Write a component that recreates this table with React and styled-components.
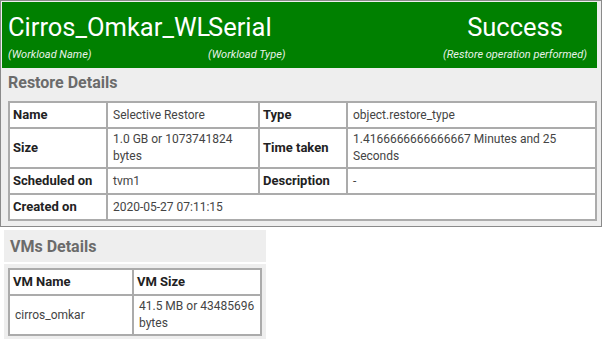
import React from 'react';
import styled, { createGlobalStyle } from 'styled-components';

const GlobalStyle = createGlobalStyle`
  body {
    margin: 0;
    background: #fff;
    font-family: Roboto, "Liberation Sans", sans-serif;
  }
`;

const restoreRows = [
  ['Name', 'Selective Restore', 'Type', 'object.restore_type'],
  ['Size', '1.0 GB or 1073741824 bytes', 'Time taken', '1.4166666666666667 Minutes and 25 Seconds'],
  ['Scheduled on', 'tvm1', 'Description', '-'],
];

export default function App() {
  return (
    <Page>
      <GlobalStyle />
      <Report>
        <Banner>
          <BannerCol>
            <BigText>Cirros_Omkar_WL</BigText>
            <Caption>(Workload Name)</Caption>
          </BannerCol>
          <BannerCol>
            <BigText>Serial</BigText>
            <Caption>(Workload Type)</Caption>
          </BannerCol>
          <BannerCol center>
            <BigText>Success</BigText>
            <Caption>(Restore operation performed)</Caption>
          </BannerCol>
        </Banner>
        <SectionTitle>Restore Details</SectionTitle>
        <TableWrap>
          <Table>
            <colgroup>
              <col style={{ width: 98 }} />
              <col style={{ width: 152 }} />
              <col style={{ width: 88 }} />
              <col />
            </colgroup>
            <tbody>
              {restoreRows.map((r) => (
                <tr key={r[0]}>
                  <Th>{r[0]}</Th>
                  <Td>{r[1]}</Td>
                  <Th>{r[2]}</Th>
                  <Td>{r[3]}</Td>
                </tr>
              ))}
              <tr>
                <Th>Created on</Th>
                <Td colSpan={3}>2020-05-27 07:11:15</Td>
              </tr>
            </tbody>
          </Table>
        </TableWrap>
      </Report>

      <VmBlock>
        <VmTitle>VMs Details</VmTitle>
        <VmBody>
          <Table>
            <colgroup>
              <col style={{ width: 124 }} />
              <col />
            </colgroup>
            <tbody>
              <tr>
                <Th>VM Name</Th>
                <Th>VM Size</Th>
              </tr>
              <tr>
                <Td>cirros_omkar</Td>
                <Td>41.5 MB or 43485696 bytes</Td>
              </tr>
            </tbody>
          </Table>
        </VmBody>
      </VmBlock>
    </Page>
  );
}

const Page = styled.div`
  width: 608px;
  height: 339px;
  overflow: hidden;
`;

const Report = styled.div`
  width: 602px;
  border: 1px solid #8a8a8a;
  background: #eeeeee;
  padding: 1px 4px 5px 1px;
  box-sizing: border-box;
`;

const Banner = styled.div`
  background: #008000;
  color: #fff;
  height: 66px;
  display: grid;
  grid-template-columns: 200px 225px 1fr;
  padding-left: 6px;
  box-sizing: border-box;
`;

const BannerCol = styled.div`
  display: flex;
  flex-direction: column;
  align-items: ${(p) => (p.center ? 'center' : 'flex-start')};
  padding-top: 10px;
  white-space: nowrap;
`;

const BigText = styled.div`
  font-size: 25.5px;
  line-height: 31px;
`;

const Caption = styled.div`
  font-size: 11px;
  font-style: italic;
  color: #e8f2e8;
  margin-top: 5px;
`;

const SectionTitle = styled.div`
  font-size: 16px;
  font-weight: bold;
  color: #6b6b6b;
  padding: 5px 0 0 6px;
  height: 28px;
  box-sizing: border-box;
`;

const TableWrap = styled.div`
  padding: 5px 0 0 6px;
`;

const Table = styled.table`
  width: 100%;
  border-collapse: collapse;
  background: #fff;
  table-layout: fixed;
`;

const Th = styled.td`
  border: 2px solid #ababab;
  font-size: 13px;
  font-weight: bold;
  color: #222;
  padding: 3px 3px;
  height: 18px;
  line-height: 18px;
  vertical-align: middle;
`;

const Td = styled.td`
  border: 2px solid #ababab;
  font-size: 12px;
  color: #444;
  padding: 2px 5px;
  line-height: 17px;
  vertical-align: middle;
`;

const VmBlock = styled.div`
  width: 262px;
  margin: 3px 0 0 4px;
`;

const VmTitle = styled.div`
  background: #eeeeee;
  height: 32px;
  font-size: 16px;
  font-weight: bold;
  color: #6b6b6b;
  padding: 7px 0 0 6px;
  box-sizing: border-box;
`;

const VmBody = styled.div`
  background: #eeeeee;
  margin-top: 2px;
  padding: 4px 4px 6px 4px;
`;
